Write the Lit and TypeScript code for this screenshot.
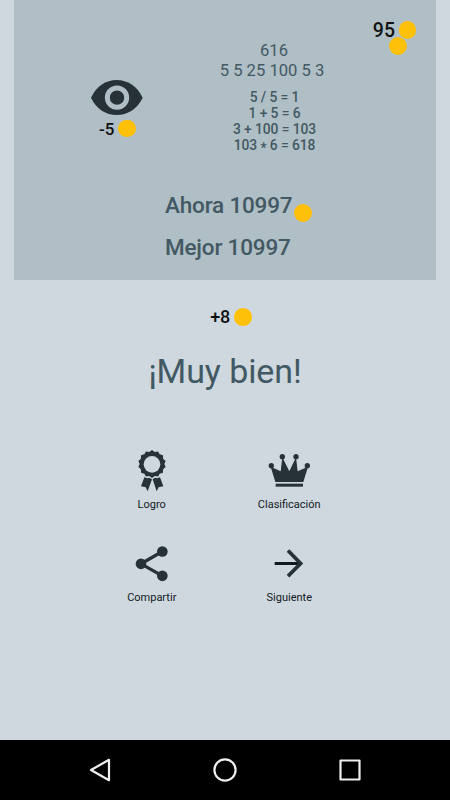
import { LitElement, html, svg, css } from "lit";
import { customElement } from "lit/decorators.js";

const STEPS = [
  "5 / 5 = 1",
  "1 + 5 = 6",
  "3 + 100 = 103",
  html`103 <span class="times">*</span> 6 = 618`,
];

// Scalloped rosette: alternating tips and notches around the centre.
const rosette = (cx: number, cy: number, teeth: number, tip: number, notch: number) =>
  Array.from({ length: teeth * 2 }, (_, i) => {
    const a = (Math.PI * i) / teeth - Math.PI / 2 + Math.PI / teeth;
    const r = i % 2 ? tip : notch;
    return `${(cx + r * Math.cos(a)).toFixed(1)},${(cy + r * Math.sin(a)).toFixed(1)}`;
  }).join(" ");

const ACTIONS = [
  {
    label: "Logro",
    box: "54 17 144 144",
    art: svg`<polygon points=${rosette(126, 71, 14, 42, 37)} />
      <circle cx="126" cy="72" r="25" fill="#cfd8df" />
      <path d="M103 111L112 114L118 112L126 117L113 153L107 141L93 138Z" />
      <path d="M150 111L141 114L135 112L128 117L140 153L146 141L160 138Z" />`,
  },
  {
    label: "Clasificación",
    box: "60 18 144 144",
    art: svg`<path d="M91 126L77 80L107 94L112 52L133 94L153 52L158 94L189 80L175 126Z" />
      <rect x="92" y="131" width="82" height="9" />
      <circle cx="79" cy="77" r="8" /><circle cx="112" cy="50" r="8" />
      <circle cx="153" cy="50" r="8" /><circle cx="187" cy="77" r="8" />`,
  },
  {
    label: "Compartir",
    box: "54 12.5 144 144",
    art: svg`<path d="M157 50L93 87L157 123" fill="none" stroke="#263238" stroke-width="10" />
      <circle cx="157" cy="50" r="16" /><circle cx="93" cy="87" r="16" /><circle cx="157" cy="123" r="16" />`,
  },
  {
    label: "Siguiente",
    box: "61 12.5 144 144",
    art: svg`<path d="M90 86H166" fill="none" stroke="#101a1f" stroke-width="9" />
      <path d="M130 47L168 86L130 124" fill="none" stroke="#263238" stroke-width="11" />`,
  },
];

@customElement("app-root")
export class AppRoot extends LitElement {
  static styles = css`
    :host {
      display: flex;
      flex-direction: column;
      height: 800px;
      background: #cfd8df;
      font-family: Roboto, sans-serif;
      color: #425963;
      overflow: hidden;
    }
    svg { display: block; fill: #263238; }
    .panel {
      position: relative;
      box-sizing: border-box;
      height: 280px;
      margin: 0 14px;
      background: #b0bec5;
    }
    .top {
      display: grid;
      grid-template-columns: 100px 160px 1fr;
      padding-left: 53px;
      height: 184px;
      padding-right: 20px;
      box-sizing: border-box;
    }
    .hint { display: flex; flex-direction: column; align-items: center; padding-top: 78.5px; }
    .amount { display: flex; align-items: center; font-weight: 500; color: #111; }
    .coin { width: 17.5px; height: 17.5px; border-radius: 50%; background: #ffc107; flex: none; }
    .cost { font-size: 17px; line-height: 20px; gap: 4px; margin: 3px 0 0 1px; }
    .puzzle { padding-top: 41.3px; margin-left: 27px; width: 160px; text-align: center; white-space: nowrap; }
    .goal { font-size: 16.6px; line-height: 19.5px; }
    .numbers { margin-left: -4px; }
    .steps { margin: 9px 0 0 1px; font-size: 13.8px; line-height: 16px; font-weight: 500; letter-spacing: -0.08px; }
    .times { display: inline-block; transform: translateY(2.5px); }
    .wallet { justify-self: end; align-self: start; margin-top: 21px; font-size: 19.5px; line-height: 20px; gap: 3.5px; }
    .wallet .coin { margin-top: -2px; }
    .flying { position: absolute; width: 18px; height: 18px; }
    .flying.first { left: 375.2px; top: 36.6px; }
    .flying.second { left: 279.8px; top: 203.5px; }
    .score { padding-left: 151px; font-size: 22.5px; line-height: 42px; font-weight: 500; letter-spacing: -0.18px; white-space: nowrap; }
    .reward { font-size: 18px; line-height: 20px; gap: 4px; justify-content: center; margin: 27px 0 0 12px; }
    .title { margin: 22.5px 0 0; text-align: center; font-size: 34px; line-height: 42px; font-weight: 400; letter-spacing: -0.1px; }
    .actions { display: grid; grid-template-columns: 137.5px 137.5px; grid-auto-rows: 93px; margin: 54.5px 0 0 83px; }
    .action { display: flex; flex-direction: column; align-items: center; }
    .label { margin-top: 2.5px; font-size: 11px; line-height: 16px; color: #111a1e; }
    .nav {
      display: grid;
      grid-template-columns: repeat(3, 125px);
      justify-content: center;
      place-items: center;
      height: 60px;
      margin-top: auto;
      background: #000;
    }
    .nav svg { fill: none; stroke: #eee; stroke-width: 2.2; stroke-linejoin: round; }
  `;

  render() {
    return html`
      <section class="panel">
        <div class="top">
          <div class="hint">
            <svg width="52" height="37" viewBox="33 25 156 111">
              <path d="M33 81C49 47 78 28 110 28S172 47 188 81C172 115 142 133 110 133S49 115 33 81Z" />
              <circle cx="111" cy="81" r="29" fill="none" stroke="#b0bec5" stroke-width="15" />
            </svg>
            <div class="amount cost">-5<span class="coin"></span></div>
          </div>
          <div class="puzzle">
            <div class="goal">616</div>
            <div class="goal numbers">5 5 25 100 5 3</div>
            <div class="steps">${STEPS.map((s) => html`<div>${s}</div>`)}</div>
          </div>
          <div class="amount wallet">95<span class="coin"></span></div>
        </div>
        <div class="score">Ahora 10997</div>
        <div class="score">Mejor 10997</div>
        <span class="coin flying first"></span>
        <span class="coin flying second"></span>
      </section>
      <div class="amount reward">+8<span class="coin"></span></div>
      <h1 class="title">¡Muy bien!</h1>
      <div class="actions">
        ${ACTIONS.map(
          (a) => html`<div class="action">
            <svg width="48" height="48" viewBox=${a.box}>${a.art}</svg>
            <span class="label">${a.label}</span>
          </div>`
        )}
      </div>
      <nav class="nav">
        <svg width="24" height="24" viewBox="0 0 24 24"><path d="M3 12L21 1.8V22.2Z" /></svg>
        <svg width="24" height="24" viewBox="0 0 24 24"><circle cx="12" cy="12" r="10.6" /></svg>
        <svg width="24" height="24" viewBox="0 0 24 24"><rect x="2.5" y="2.5" width="19" height="19" /></svg>
      </nav>
    `;
  }
}
